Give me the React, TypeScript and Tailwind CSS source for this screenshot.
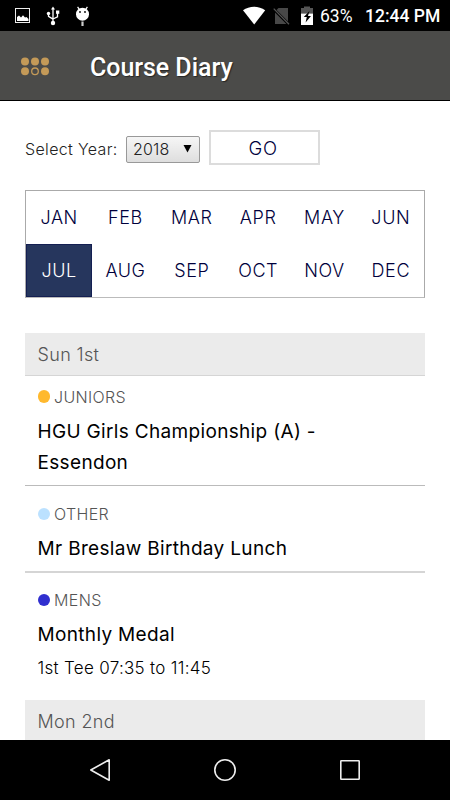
import React from "react";

const MONTHS = ["JAN", "FEB", "MAR", "APR", "MAY", "JUN", "JUL", "AUG", "SEP", "OCT", "NOV", "DEC"];

interface EventProps {
  category: string;
  color: string;
  lines: string[];
  note?: string;
  className?: string;
}

const StatusBar = () => (
  <div className="flex h-[31px] shrink-0 items-center bg-black font-[Roboto,sans-serif] text-white">
    {/* Notification icons */}
    <svg className="h-[31px] w-[100px]" viewBox="0 0 100 31" fill="none">
      <rect x="15.5" y="8.5" width="14" height="14" stroke="#ededed" />
      <path d="M17 21v-4l2-1.5 2 2 2-2.2 2 2.2 1.5-.5 2 2V21z" fill="#fff" />
      <path d="M53 9v14M48.5 13.5v2.8l4.5 2.8M57.5 12.5v4.3L53 19" stroke="#fff" strokeWidth="1.3" />
      <path d="M53 6.5l2 3h-4z" fill="#fff" />
      <circle cx="53" cy="23" r="2.2" fill="#fff" />
      <circle cx="48.5" cy="13.5" r="1.7" fill="#fff" />
      <path d="M56 10.5h3.3v3.3H56z" fill="#fff" />
      <path d="M77.6 6.8l2 3M87.4 6.8l-2 3" stroke="#fff" strokeWidth="1.2" />
      <circle cx="82.5" cy="14.2" r="6.5" fill="#fff" />
      <path d="M82.5 21.5V26" stroke="#ccc" strokeWidth="2.2" />
      <circle cx="80" cy="12" r=".9" fill="#000" />
      <circle cx="85" cy="12" r=".9" fill="#000" />
    </svg>

    {/* System icons */}
    <svg className="ml-[140px] h-[31px] w-[78px]" viewBox="240 0 78 31" fill="none">
      <path d="M243 10.3c6.3-4.7 15.8-4.7 22.2 0L254.2 24.5z" fill="#fff" />
      <path d="M278.5 8h9.5v16h-13V11.5z" fill="#484848" />
      <path d="M273.5 9l15.5 15.5" stroke="#000" strokeWidth="3" />
      <path d="M273.7 8.6l15.3 15.7" stroke="#555" strokeWidth="1.3" />
      <path d="M304 6.5h6V8h3v5.5h-12V8h3z" fill="#555" />
      <path d="M301 13.5h12V25h-12z" fill="#fff" />
      <path d="M309.5 11l-5.7 6h3l-1.2 5.5 5.4-6.5h-3z" fill="#000" />
    </svg>
    <span className="mt-[3px] ml-[2px] w-[45px] text-[17.5px] leading-none">63%</span>
    <span className="mt-[3px] text-[17.5px] leading-none font-medium whitespace-nowrap">12:44 PM</span>
  </div>
);

const TopBar = () => (
  <header className="flex h-[70px] shrink-0 items-center border-b border-black bg-[#4b4b49] pl-[21px]">
    <svg className="h-[20px] w-[28px]" viewBox="0 0 28 20" fill="#c49a58">
      <circle cx="4" cy="5.5" r="4" />
      <circle cx="14" cy="5.5" r="4" />
      <circle cx="24" cy="5.5" r="4" />
      <circle cx="4" cy="15.3" r="4" />
      <circle cx="14" cy="15.3" r="3.3" fill="none" stroke="#c49a58" strokeWidth="1.3" />
      <circle cx="24" cy="15.3" r="4" />
    </svg>
    <h1 className="mt-[4px] ml-[41px] font-[Roboto,sans-serif] text-[25px] leading-none font-medium tracking-[-0.05px] text-white [text-shadow:1px_1px_1px_rgba(0,0,0,0.5)]">
      Course Diary
    </h1>
  </header>
);

const DayHeading = ({ label }: { label: string }) => (
  <h2 className="h-[43px] border-b border-[#d5d5d5] bg-[#ebebeb] pl-[12.5px] text-[18px] leading-[44px] font-light tracking-[0.35px] text-[#555]">
    {label}
  </h2>
);

const DiaryEvent = ({ category, color, lines, note, className = "" }: EventProps) => (
  <article className={`pl-[12.5px] ${className}`}>
    <div className="flex h-[20px] items-center gap-[4px] text-[16px] font-light tracking-[0.35px] text-[#555]">
      <span className="h-[12.5px] w-[12.5px] rounded-full" style={{ backgroundColor: color }} />
      <span className="leading-none">{category}</span>
    </div>
    <h3 className="mt-[9px] text-[19px] leading-[31.5px] tracking-[0.33px] text-black">
      {lines.map((line) => (
        <span key={line} className="block whitespace-nowrap">
          {line}
        </span>
      ))}
    </h3>
    {note && <p className="text-[17px] leading-[34px] font-light tracking-[0.3px] text-black">{note}</p>}
  </article>
);

const NavBar = () => (
  <nav className="flex h-[60px] shrink-0 items-center justify-center bg-black">
    <svg className="h-[60px] w-[450px]" viewBox="0 0 450 60" fill="none" stroke="#eee" strokeWidth="1.6" strokeLinejoin="round">
      <path d="M109.2 19.8v20.4L90.8 30z" />
      <circle cx="225" cy="30" r="10.2" />
      <rect x="340.8" y="20.8" width="18.4" height="18.4" rx=".5" />
    </svg>
  </nav>
);

export default function App() {
  return (
    <div className="flex h-[800px] w-[450px] flex-col overflow-hidden bg-white font-[Inter,sans-serif]">
      <StatusBar />
      <TopBar />
      <main className="min-h-0 flex-1 overflow-hidden px-[25px] pt-[29px]">
        {/* Year picker */}
        <div className="flex h-[35px] items-center">
          <label className="w-[101px] pt-[3px] text-[16px] leading-none font-light tracking-[0.35px] whitespace-nowrap text-[#222]">
            Select Year:
          </label>
          <div className="mt-[3px] flex h-[27px] w-[74px] items-center justify-between rounded-[2px] border border-[#999] bg-linear-to-b from-[#f6f6f6] to-[#dedede] pr-[7px] pl-[6px]">
            <span className="text-[16px] leading-none font-light tracking-[0.2px] text-[#222]">2018</span>
            <svg className="mb-[1px] h-[8px] w-[9px]" viewBox="0 0 9 8">
              <path d="M.5 0h8l-4 7.5z" />
            </svg>
          </div>
          <button className="ml-[8.5px] h-[35px] w-[111.5px] border-2 border-[#dcdcdc] pt-[2px] pr-[2px] text-[18.5px] leading-none font-light tracking-[0.8px] text-[#00003c]">
            GO
          </button>
        </div>

        {/* Months */}
        <div className="mt-[25px] grid h-[108px] grid-cols-6 grid-rows-2 border border-[#aaa] border-b-[#bbb]">
          {MONTHS.map((month) => (
            <div
              key={month}
              className={`flex items-center justify-center text-[18px] leading-none font-light tracking-[0.6px] ${
                month === "JUL" ? "border border-[#141f52] bg-[#26365d] text-white" : "text-[#00003c]"
              }`}
            >
              {month}
            </div>
          ))}
        </div>

        <section className="mt-[35px]">
          <DayHeading label="Sun 1st" />
          <DiaryEvent
            className="h-[110px] border-b border-[#bbb] pt-[10.5px]"
            category="JUNIORS"
            color="#ffb92e"
            lines={["HGU Girls Championship (A) -", "Essendon"]}
          />
          <DiaryEvent
            className="h-[87px] border-b-2 border-[#d5d5d5] pt-[18px]"
            category="OTHER"
            color="#bbe1ff"
            lines={["Mr Breslaw Birthday Lunch"]}
          />
          <DiaryEvent
            className="h-[127px] pt-[17px]"
            category="MENS"
            color="#302fcf"
            lines={["Monthly Medal"]}
            note="1st Tee 07:35 to 11:45"
          />
          <DayHeading label="Mon 2nd" />
        </section>
      </main>
      <NavBar />
    </div>
  );
}
